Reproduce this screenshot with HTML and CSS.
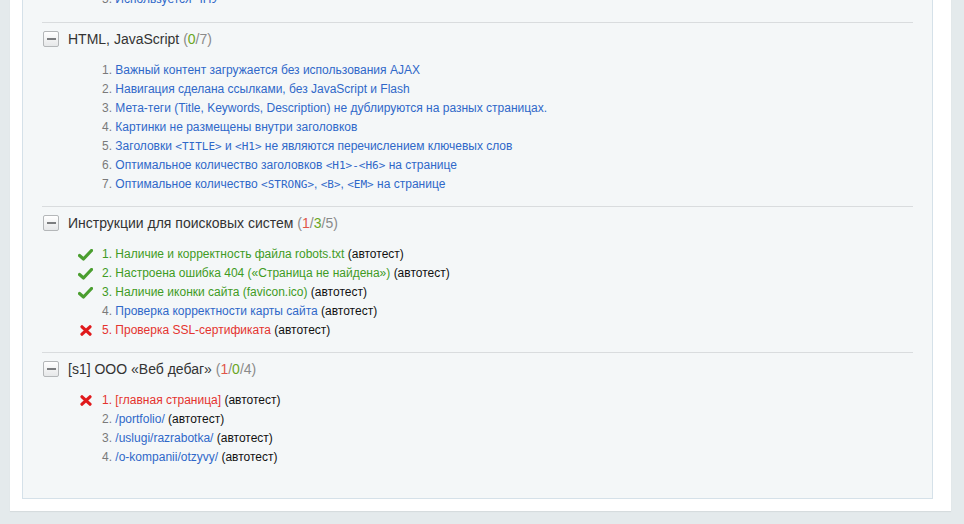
FILE: index.html
```html
<!DOCTYPE html>
<html lang="ru">
<head>
<meta charset="utf-8">
<title>SEO</title>
<link rel="stylesheet" href="styles.css">
</head>
<body>
<div class="page">
  <div class="panel">
    <div class="box">
      <ol class="items items-top">
        <li><span class="num">5.</span> <a class="lnk">Используется ЧПУ</a></li>
      </ol>

      <section class="group">
        <div class="head">
          <span class="toggle"><span class="bar"></span></span>
          <span class="title">HTML, JavaScript <span class="cnt">(<span class="ok">0</span>/7)</span></span>
        </div>
        <ol class="items">
          <li><span class="num">1.</span> <a class="lnk">Важный контент загружается без использования AJAX</a></li>
          <li><span class="num">2.</span> <a class="lnk">Навигация сделана ссылками, без JavaScript и Flash</a></li>
          <li><span class="num">3.</span> <a class="lnk">Мета-теги (Title, Keywords, Description) не дублируются на разных страницах.</a></li>
          <li><span class="num">4.</span> <a class="lnk">Картинки не размещены внутри заголовков</a></li>
          <li><span class="num">5.</span> <a class="lnk">Заголовки <code>&lt;TITLE&gt;</code> и <code>&lt;H1&gt;</code> не являются перечислением ключевых слов</a></li>
          <li><span class="num">6.</span> <a class="lnk">Оптимальное количество заголовков <code>&lt;H1&gt;-&lt;H6&gt;</code> на странице</a></li>
          <li><span class="num">7.</span> <a class="lnk">Оптимальное количество <code>&lt;STRONG&gt;</code>, <code>&lt;B&gt;</code>, <code>&lt;EM&gt;</code> на странице</a></li>
        </ol>
      </section>

      <section class="group">
        <div class="head">
          <span class="toggle"><span class="bar"></span></span>
          <span class="title">Инструкции для поисковых систем <span class="cnt">(<span class="bad">1</span>/<span class="ok">3</span>/5)</span></span>
        </div>
        <ol class="items">
          <li class="pass"><svg class="ico" width="15" height="12" viewBox="0 0 15 12"><path d="M1.5 6.5 L5.5 10 L13.5 1.5" fill="none" stroke="#4a9e2f" stroke-width="3.2" stroke-linecap="round" stroke-linejoin="round"/></svg><span class="num">1.</span> <a class="lnk">Наличие и корректность файла robots.txt</a> <span class="auto">(автотест)</span></li>
          <li class="pass"><svg class="ico" width="15" height="12" viewBox="0 0 15 12"><path d="M1.5 6.5 L5.5 10 L13.5 1.5" fill="none" stroke="#4a9e2f" stroke-width="3.2" stroke-linecap="round" stroke-linejoin="round"/></svg><span class="num">2.</span> <a class="lnk">Настроена ошибка 404 («Страница не найдена»)</a> <span class="auto">(автотест)</span></li>
          <li class="pass"><svg class="ico" width="15" height="12" viewBox="0 0 15 12"><path d="M1.5 6.5 L5.5 10 L13.5 1.5" fill="none" stroke="#4a9e2f" stroke-width="3.2" stroke-linecap="round" stroke-linejoin="round"/></svg><span class="num">3.</span> <a class="lnk">Наличие иконки сайта (favicon.ico)</a> <span class="auto">(автотест)</span></li>
          <li><span class="num">4.</span> <a class="lnk">Проверка корректности карты сайта</a> <span class="auto">(автотест)</span></li>
          <li class="fail"><svg class="ico ico-x" width="12" height="11" viewBox="0 0 12 11"><path d="M2 1.8 L10 9.2 M10 1.8 L2 9.2" fill="none" stroke="#e0191b" stroke-width="3.2" stroke-linecap="round"/></svg><span class="num">5.</span> <a class="lnk">Проверка SSL-сертификата</a> <span class="auto">(автотест)</span></li>
        </ol>
      </section>

      <section class="group">
        <div class="head">
          <span class="toggle"><span class="bar"></span></span>
          <span class="title">[s1] ООО «Веб дебаг» <span class="cnt">(<span class="bad">1</span>/<span class="ok">0</span>/4)</span></span>
        </div>
        <ol class="items">
          <li class="fail"><svg class="ico ico-x" width="12" height="11" viewBox="0 0 12 11"><path d="M2 1.8 L10 9.2 M10 1.8 L2 9.2" fill="none" stroke="#e0191b" stroke-width="3.2" stroke-linecap="round"/></svg><span class="num">1.</span> <a class="lnk">[главная страница]</a> <span class="auto">(автотест)</span></li>
          <li><span class="num">2.</span> <a class="lnk">/portfolio/</a> <span class="auto">(автотест)</span></li>
          <li><span class="num">3.</span> <a class="lnk">/uslugi/razrabotka/</a> <span class="auto">(автотест)</span></li>
          <li><span class="num">4.</span> <a class="lnk">/o-kompanii/otzyvy/</a> <span class="auto">(автотест)</span></li>
        </ol>
      </section>
    </div>
  </div>
</div>
</body>
</html>
```

FILE: styles.css
```css
html, body {
  margin: 0;
  padding: 0;
}

body {
  background: #e4eaec;
  font-family: "Liberation Sans", Arial, sans-serif;
  font-size: 12px;
  color: #000;
  overflow: hidden;
}

.page {
  padding: 0 13px 13px 10px;
}

.panel {
  margin-top: -40px;
  background: #fff;
  padding: 0 18px 12px 12px;
  box-shadow: 0 1px 1px rgba(0, 0, 0, 0.06);
}

.box {
  background: #f4f7f8;
  border: 1px solid #d5e1e9;
  padding: 0 0 19px 0;
}

.items {
  list-style: none;
  margin: 14px 0 0 0;
  padding: 0 0 0 60px;
  line-height: 19px;
}

.items-top {
  margin: 0;
  padding-top: 29px;
  padding-bottom: 13px;
  padding-left: 79px;
}

.items li {
  position: relative;
  white-space: nowrap;
}

.num {
  color: #7a7a7a;
}

.lnk {
  color: #2f68c9;
  text-decoration: none;
  cursor: pointer;
}

code {
  font-family: "DejaVu Sans Mono", "Liberation Mono", monospace;
  font-size: 11px;
}

.auto {
  color: #111;
}

.pass .num,
.pass .lnk {
  color: #3f9b24;
}

.fail .num,
.fail .lnk {
  color: #e4342f;
}

.ico {
  position: absolute;
  left: -24px;
  top: 4px;
}

.ico-x {
  left: -22px;
  top: 4px;
}

.group {
  margin: 0 19px;
  border-top: 1px solid #d9dcde;
  padding: 8px 0 12px 0;
}

.head {
  display: flex;
  align-items: center;
  gap: 9px;
  padding-left: 1px;
  height: 16px;
}

.toggle {
  box-sizing: border-box;
  width: 16px;
  height: 16px;
  border: 1px solid #b4b7b9;
  border-radius: 2px;
  background: linear-gradient(#ffffff, #e6e8e9);
  display: flex;
  align-items: center;
  justify-content: center;
}

.bar {
  width: 9px;
  height: 2px;
  background: #7b7d7f;
}

.title {
  font-size: 14px;
  color: #333;
  line-height: 16px;
}

.cnt {
  color: #8a8a8a;
}

.cnt .ok {
  color: #6aa61e;
}

.cnt .bad {
  color: #e0564a;
}
```
